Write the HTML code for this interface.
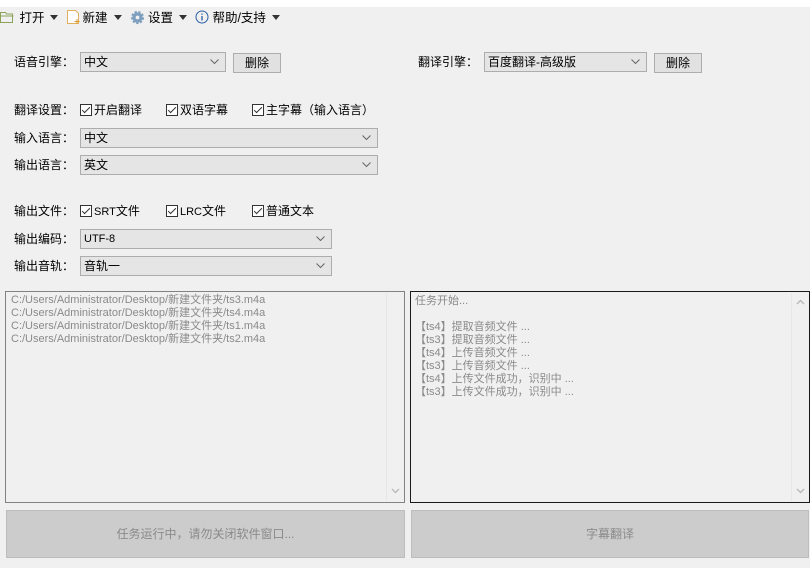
<!DOCTYPE html>
<html><head><meta charset="utf-8"><style>
*{box-sizing:border-box;margin:0;padding:0}
body{width:810px;height:568px;background:#f0f0f0;position:relative;overflow:hidden;font-family:"Liberation Sans","Noto Sans CJK SC",sans-serif;font-size:12px;color:#000}
.a{position:absolute;white-space:nowrap}
.top{left:0;top:0;width:810px;height:7px;background:#fff}
.lbl{line-height:16px}
.cb{position:absolute;height:20px;background:#e5e5e5;border:1px solid #adadad;padding-left:3px;line-height:18px}
.cb svg{position:absolute;right:6px;top:6px}
.btn{position:absolute;height:20px;background:#e1e1e1;border:1px solid #adadad;text-align:center;line-height:18px}
.chk{position:absolute;line-height:16px}
.chk i{display:inline-block;width:12px;height:12px;border:1px solid #333;background:#fff;vertical-align:-2px;margin-right:2px;position:relative}
.chk i:after{content:"";position:absolute;left:3px;top:0px;width:3px;height:7px;border:solid #333;border-width:0 1.3px 1.3px 0;transform:rotate(45deg)}
.ta{position:absolute;top:291px;height:212px;border:1px solid #828282;background:#f0f0f0;color:#8a8a8a;font-size:11px;line-height:13px;padding:2px 0 0 5px}
.sb{position:absolute;right:1px;top:1px;bottom:1px;width:17px;border-left:1px solid #e6e6e6}
.bb{position:absolute;top:510px;height:48px;background:#cccccc;border:1px solid #bdbdbd;color:#8a8a8a;text-align:center;line-height:46px;font-size:12px}
.ar{display:inline-block;width:0;height:0;border-left:4px solid transparent;border-right:4px solid transparent;border-top:5px solid #333;vertical-align:2px;margin:0 8px 0 6px}
.tb{left:0;top:10px;line-height:16px;font-size:12.5px}
</style></head><body>
<div class="a top"></div>
<div class="a tb">
<svg width="16" height="12" style="vertical-align:-1px" viewBox="0 0 16 12"><path d="M0.5 1.5h5l1 1.5h6v8.5h-12z M0.5 5h13" fill="none" stroke="#8aa55a"/></svg> 打开<span class="ar"></span><svg width="16" height="15" style="vertical-align:-3px" viewBox="0 0 16 15"><path d="M1.5 0.5h8l3 3v10h-11z" fill="#fff" stroke="#e0b060"/><path d="M11 9v5M8.5 11.5h5" stroke="#d89a30"/></svg>新建<span class="ar"></span><svg width="15" height="15" style="vertical-align:-3px" viewBox="0 0 16 16"><circle cx="8" cy="8" r="5.5" fill="#7f9fbf" stroke="#7f9fbf" stroke-width="3" stroke-dasharray="2.2 1.6"/><circle cx="8" cy="8" r="2" fill="#f0f0f0"/></svg> 设置<span class="ar"></span><svg width="14" height="14" style="vertical-align:-2px" viewBox="0 0 14 14"><circle cx="7" cy="7" r="6" fill="none" stroke="#2a5ea8"/><path d="M7 6v4.5M7 3.5v1.3" stroke="#2a5ea8" stroke-width="1.3"/></svg> 帮助/支持<span class="ar"></span>
</div>

<div class="a lbl" style="left:14px;top:54px">语音引擎：</div>
<div class="cb" style="left:80px;top:52px;width:146px">中文<svg width="9" height="6"><path d="M0.5 0.5l4 4 4-4" fill="none" stroke="#666"/></svg></div>
<div class="btn" style="left:233px;top:53px;width:48px">删除</div>
<div class="a lbl" style="left:418px;top:54px">翻译引擎：</div>
<div class="cb" style="left:484px;top:52px;width:163px">百度翻译-高级版<svg width="9" height="6"><path d="M0.5 0.5l4 4 4-4" fill="none" stroke="#666"/></svg></div>
<div class="btn" style="left:654px;top:53px;width:48px">删除</div>

<div class="a lbl" style="left:14px;top:102px">翻译设置：</div>
<div class="chk" style="left:80px;top:102px"><i></i>开启翻译</div>
<div class="chk" style="left:166px;top:102px"><i></i>双语字幕</div>
<div class="chk" style="left:252px;top:102px"><i></i>主字幕（输入语言）</div>

<div class="a lbl" style="left:14px;top:130px">输入语言：</div>
<div class="cb" style="left:80px;top:128px;width:298px">中文<svg width="9" height="6"><path d="M0.5 0.5l4 4 4-4" fill="none" stroke="#666"/></svg></div>
<div class="a lbl" style="left:14px;top:157px">输出语言：</div>
<div class="cb" style="left:80px;top:155px;width:298px">英文<svg width="9" height="6"><path d="M0.5 0.5l4 4 4-4" fill="none" stroke="#666"/></svg></div>

<div class="a lbl" style="left:14px;top:203px">输出文件：</div>
<div class="chk" style="left:80px;top:203px"><i></i><span style="font-size:11px">SRT</span>文件</div>
<div class="chk" style="left:166px;top:203px"><i></i><span style="font-size:11px">LRC</span>文件</div>
<div class="chk" style="left:252px;top:203px"><i></i>普通文本</div>

<div class="a lbl" style="left:14px;top:231px">输出编码：</div>
<div class="cb" style="left:80px;top:229px;width:252px;font-size:11px">UTF-8<svg width="9" height="6"><path d="M0.5 0.5l4 4 4-4" fill="none" stroke="#666"/></svg></div>
<div class="a lbl" style="left:14px;top:258px">输出音轨：</div>
<div class="cb" style="left:80px;top:256px;width:252px">音轨一<svg width="9" height="6"><path d="M0.5 0.5l4 4 4-4" fill="none" stroke="#666"/></svg></div>

<div class="ta" style="left:5px;width:400px">C:/Users/Administrator/Desktop/新建文件夹/ts3.m4a<br>C:/Users/Administrator/Desktop/新建文件夹/ts4.m4a<br>C:/Users/Administrator/Desktop/新建文件夹/ts1.m4a<br>C:/Users/Administrator/Desktop/新建文件夹/ts2.m4a
<div class="sb"><svg width="17" height="10" style="position:absolute;bottom:4px;left:0"><path d="M5 2l3.5 3.5 3.5-3.5" fill="none" stroke="#bbb" stroke-width="1.5"/></svg></div></div>

<div class="ta" style="left:410px;width:400px;border-color:#1a1a1a;padding-left:4px;padding-top:3px">任务开始...<br><br>【ts4】提取音频文件 ...<br>【ts3】提取音频文件 ...<br>【ts4】上传音频文件 ...<br>【ts3】上传音频文件 ...<br>【ts4】上传文件成功，识别中 ...<br>【ts3】上传文件成功，识别中 ...
<div class="sb"><svg width="17" height="10" style="position:absolute;top:5px;left:0"><path d="M5 6l3.5-3.5 3.5 3.5" fill="none" stroke="#bbb" stroke-width="1.5"/></svg><svg width="17" height="10" style="position:absolute;bottom:4px;left:0"><path d="M5 2l3.5 3.5 3.5-3.5" fill="none" stroke="#bbb" stroke-width="1.5"/></svg></div></div>

<div class="bb" style="left:6px;width:399px">任务运行中，请勿关闭软件窗口...</div>
<div class="bb" style="left:411px;width:398px">字幕翻译</div>
</body></html>
